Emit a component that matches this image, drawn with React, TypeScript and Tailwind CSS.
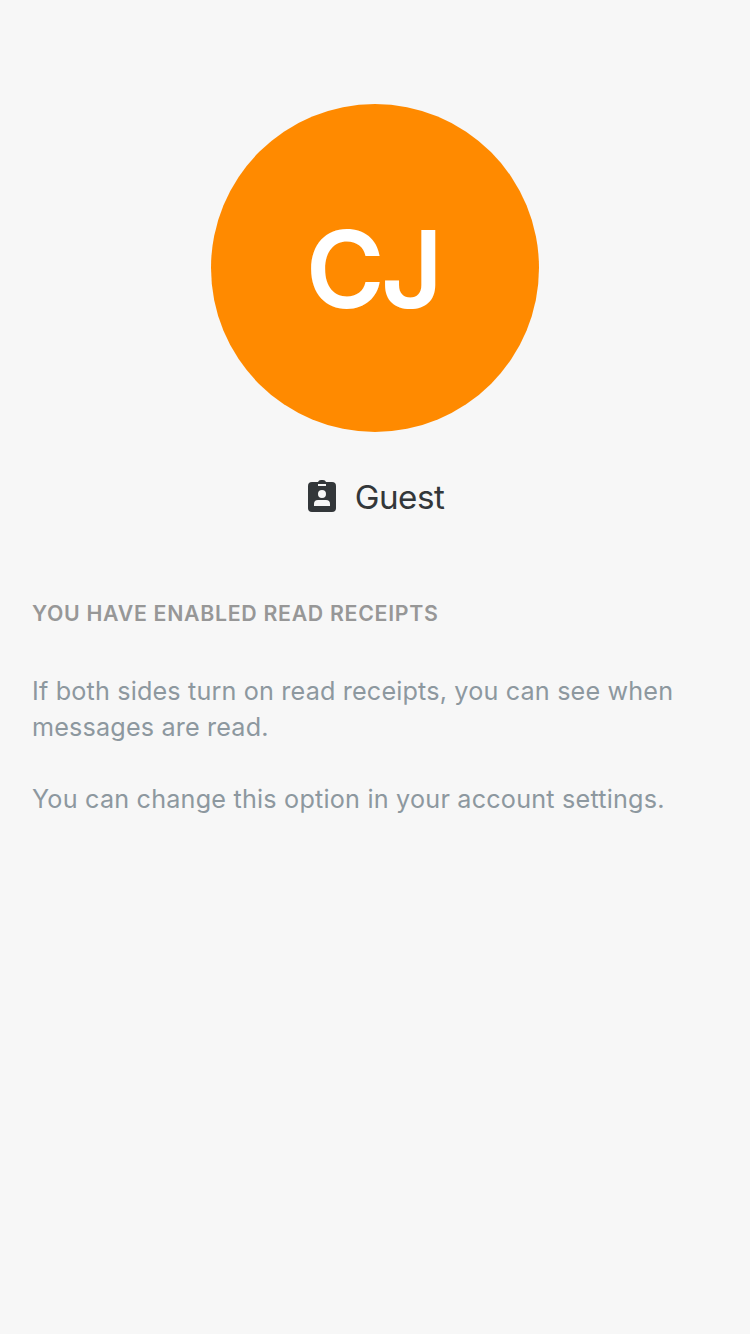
export default function App() {
  return (
    <main className="flex min-h-[1334px] w-full flex-col items-center bg-[#f7f7f7] pt-[104px] font-['Inter',sans-serif]">
      <div className="flex size-[328px] items-center justify-center rounded-full bg-[#ff8a00]">
        <span className="pt-[2px] pr-[5px] text-[107px] leading-none font-semibold tracking-[-3.7px] whitespace-nowrap text-white">CJ</span>
      </div>
      <div className="mt-[44px] flex h-[40px] items-center gap-[19px] pl-[2px] text-[#33373a]">
        <svg width="28" height="32" viewBox="0 0 28 32" fill="currentColor">
          <path fillRule="evenodd" d="M4 2H10Q10.6 0 13 0H15Q17.4 0 18 2H24Q28 2 28 6V28Q28 32 24 32H4Q0 32 0 28V6Q0 2 4 2ZM10 4V6H18V4ZM14 10A4 4 0 1 0 14 18A4 4 0 1 0 14 10ZM6 26H22V24Q22 20 18 20H10Q6 20 6 24Z" />
        </svg>
        <span className="pt-[2px] text-[33.2px] leading-[40px] tracking-[-0.5px]">Guest</span>
      </div>
      <section className="mt-[84px] w-full px-[32px]">
        <h2 className="text-[21.3px] leading-[26px] font-semibold tracking-[0.7px] whitespace-nowrap text-[#979797]">YOU HAVE ENABLED READ RECEIPTS</h2>
        <div className="mt-[47px] text-[25.2px] leading-[36px] tracking-[0.16px] whitespace-nowrap text-[#8d989f]">
          <p>If both sides turn on read receipts, you can see when<br />messages are read.</p>
          <p className="mt-[36px] tracking-[0.2px]">You can change this option in your account settings.</p>
        </div>
      </section>
    </main>
  );
}
